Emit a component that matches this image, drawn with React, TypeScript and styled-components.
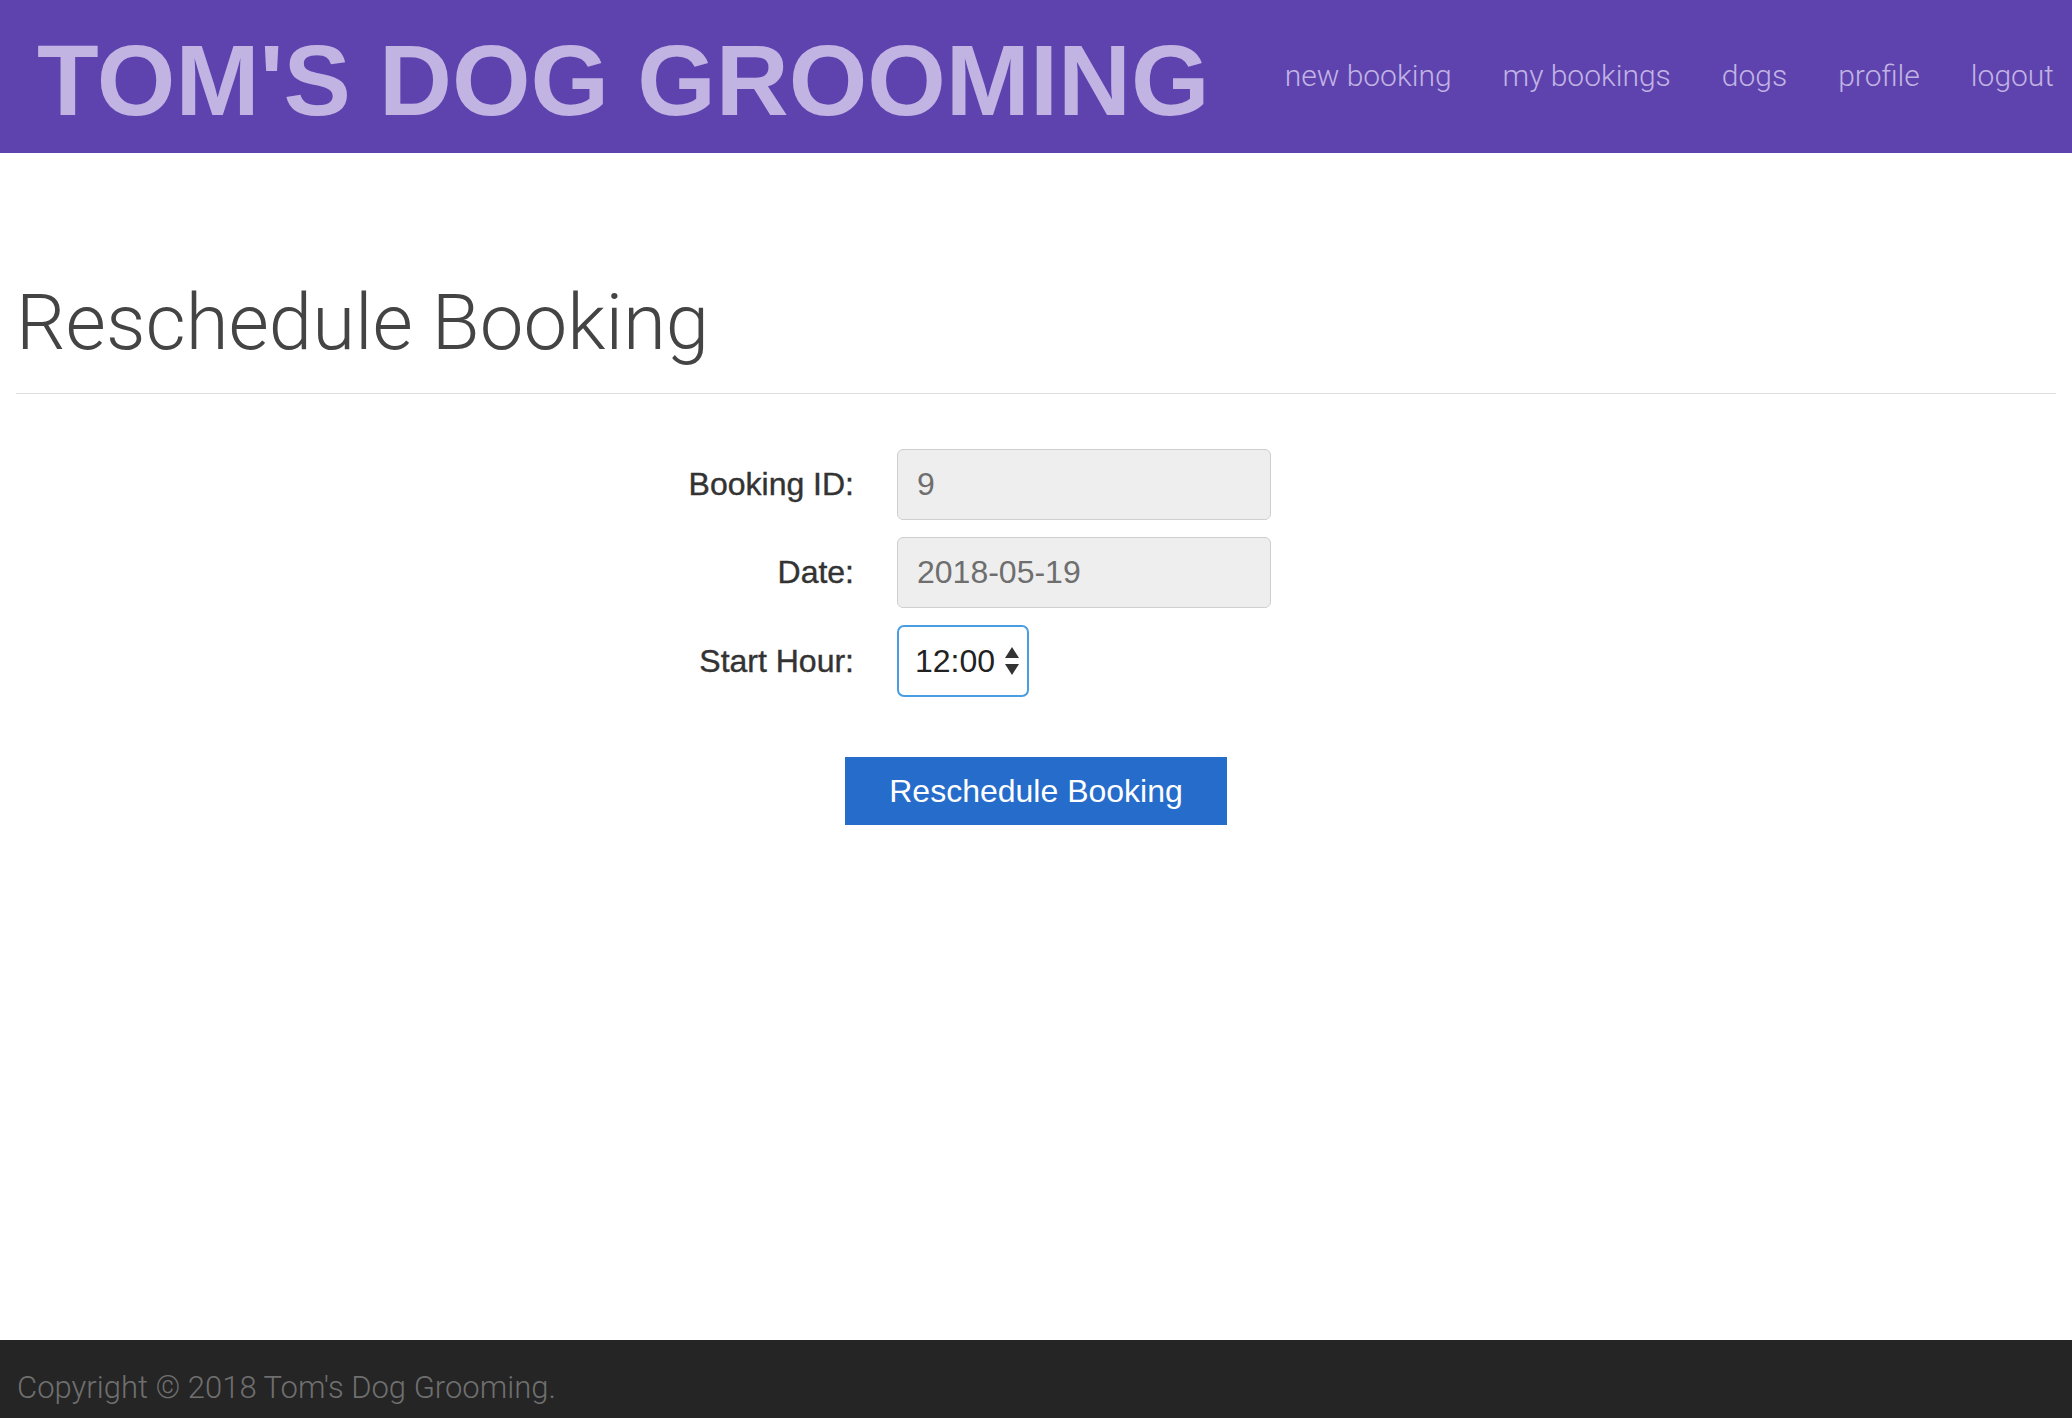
import React from "react";
import styled, { createGlobalStyle } from "styled-components";

const GlobalStyle = createGlobalStyle`
  html, body { margin: 0; padding: 0; background: #fff; }
  body { font-family: "Liberation Sans", Arial, sans-serif; }
  * { box-sizing: border-box; }
`;

const Page = styled.div`
  min-height: 100vh;
  display: flex;
  flex-direction: column;
`;

const Header = styled.header`
  height: 153px;
  background: #5e43af;
  display: flex;
  justify-content: space-between;
  align-items: flex-start;
  padding: 0 18px 0 37px;
`;

const Brand = styled.div`
  font-family: "Liberation Sans", Arial, sans-serif;
  font-weight: 700;
  font-size: 101px;
  line-height: 101px;
  color: #c1b4e3;
  margin-top: 30px;
  white-space: nowrap;
`;

const Nav = styled.nav`
  display: flex;
  gap: 51px;
  margin-top: 59px;
`;

const NavLink = styled.a`
  font-family: Roboto, "Liberation Sans", sans-serif;
  font-weight: 300;
  font-size: 30px;
  line-height: 34px;
  color: #c1b4e3;
  text-decoration: none;
  white-space: nowrap;
`;

const Main = styled.main`
  flex: 1;
  padding: 0 16px;
`;

const Title = styled.h1`
  font-family: Roboto, "Liberation Sans", sans-serif;
  font-weight: 300;
  font-size: 78px;
  line-height: 90px;
  color: #444;
  margin: 125px 0 0;
  padding-bottom: 25px;
  border-bottom: 1px solid #dedede;
`;

const Form = styled.form`
  display: grid;
  grid-template-columns: 838px 374px;
  column-gap: 43px;
  row-gap: 17px;
  margin-top: 55px;
  align-items: center;
`;

const Label = styled.label`
  font-family: "Liberation Sans", Arial, sans-serif;
  font-weight: 400;
  font-size: 32px;
  color: #333;
  text-align: right;
  -webkit-text-stroke: 0.4px #333;
`;

const TextInput = styled.input`
  height: 71px;
  width: 374px;
  border: 1px solid #cfcfcf;
  border-radius: 6px;
  background: #eeeeee;
  padding: 0 19px;
  font-family: "Liberation Sans", Arial, sans-serif;
  font-size: 32px;
  color: #6e6e6e;
  outline: none;
`;

const SelectBox = styled.div`
  position: relative;
  width: 132px;
  height: 72px;
  border: 2px solid #4b9de1;
  border-radius: 7px;
  background: #fff;
  display: flex;
  align-items: center;
  padding-left: 16px;
  font-family: "Liberation Sans", Arial, sans-serif;
  font-size: 32px;
  color: #222;
`;

const Arrows = styled.svg`
  position: absolute;
  right: 8px;
  top: 50%;
  transform: translateY(-50%);
`;

const ButtonRow = styled.div`
  display: flex;
  justify-content: center;
  margin-top: 60px;
`;

const Button = styled.button`
  width: 382px;
  height: 68px;
  background: #266ccb;
  border: none;
  border-radius: 0;
  color: #fff;
  font-family: "Liberation Sans", Arial, sans-serif;
  font-size: 32px;
  cursor: pointer;
`;

const Footer = styled.footer`
  height: 78px;
  background: #252525;
  padding: 30px 17px 0;
`;

const FooterText = styled.div`
  font-family: Roboto, "Liberation Sans", sans-serif;
  font-weight: 300;
  font-size: 31px;
  line-height: 36px;
  color: #6f6f6f;
  white-space: nowrap;
`;

export default function App() {
  return (
    <Page>
      <GlobalStyle />
      <Header>
        <Brand>TOM'S DOG GROOMING</Brand>
        <Nav>
          <NavLink href="#">new booking</NavLink>
          <NavLink href="#">my bookings</NavLink>
          <NavLink href="#">dogs</NavLink>
          <NavLink href="#">profile</NavLink>
          <NavLink href="#">logout</NavLink>
        </Nav>
      </Header>
      <Main>
        <Title>Reschedule Booking</Title>
        <Form onSubmit={(e) => e.preventDefault()}>
          <Label>Booking ID:</Label>
          <TextInput value="9" disabled readOnly />
          <Label>Date:</Label>
          <TextInput value="2018-05-19" disabled readOnly />
          <Label>Start Hour:</Label>
          <SelectBox>
            12:00
            <Arrows width="14" height="28" viewBox="0 0 14 28">
              <polygon points="7,0 14,11 0,11" fill="#333" />
              <polygon points="0,17 14,17 7,28" fill="#333" />
            </Arrows>
          </SelectBox>
        </Form>
        <ButtonRow>
          <Button type="button">Reschedule Booking</Button>
        </ButtonRow>
      </Main>
      <Footer>
        <FooterText>Copyright © 2018 Tom's Dog Grooming.</FooterText>
      </Footer>
    </Page>
  );
}
